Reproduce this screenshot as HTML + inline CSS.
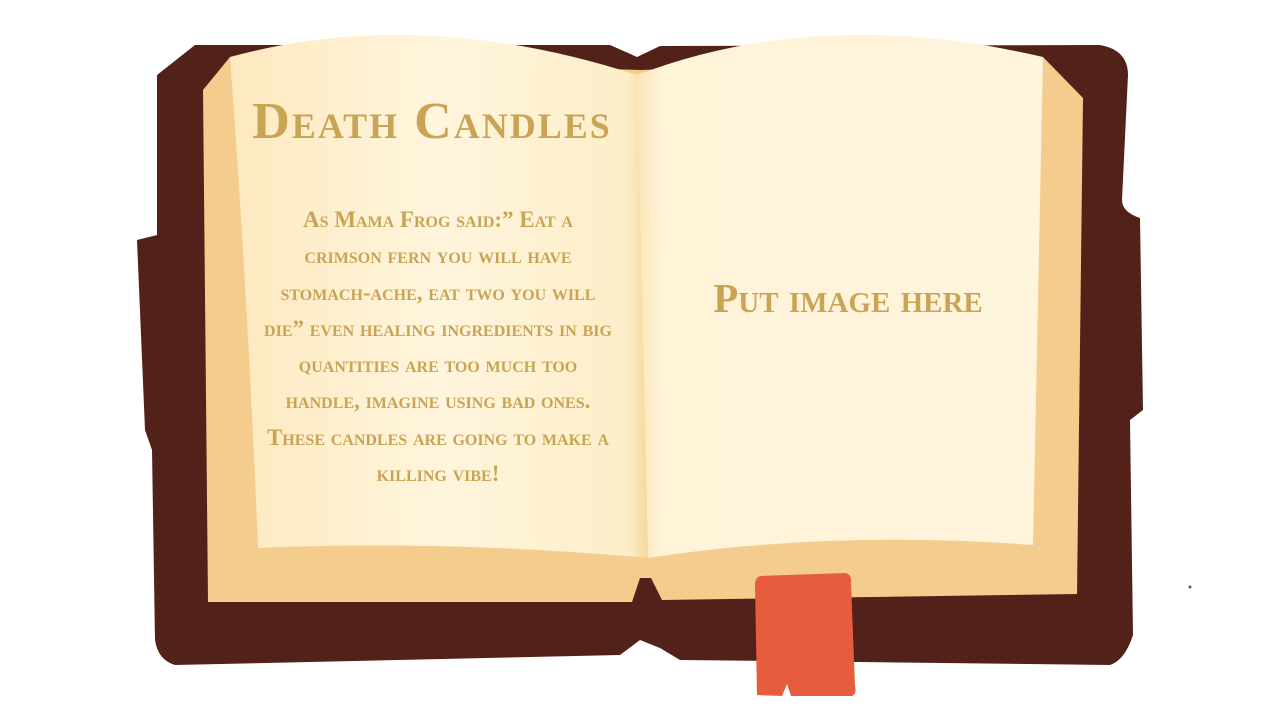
<!DOCTYPE html>
<html><head><meta charset="utf-8"><style>
html,body{margin:0;padding:0;background:#fff;width:1280px;height:720px;overflow:hidden;position:relative}
.t{position:absolute;color:#c9a455;font-family:"Liberation Serif",serif;font-variant:small-caps;text-align:center;font-weight:bold;white-space:nowrap}
</style></head><body>
<svg width="1280" height="720" style="position:absolute;left:0;top:0">
<defs>
<linearGradient id="pl" x1="0" x2="1"><stop offset="0" stop-color="#fde9bf"/><stop offset="0.5" stop-color="#fff5dd"/><stop offset="0.95" stop-color="#fdeec9"/><stop offset="1" stop-color="#f6d89a"/></linearGradient>
<linearGradient id="pr" x1="0" x2="1"><stop offset="0" stop-color="#fbe6b6"/><stop offset="0.06" stop-color="#fff3d8"/><stop offset="1" stop-color="#fff4dc"/></linearGradient>
</defs>
<path fill="#52221a" d="M195,45 L610,45 L637,57 L660,46 L1100,45 Q1128,50 1128,75 L1122,200 Q1122,212 1140,218 L1143,410 L1130,420 L1133,635 Q1125,660 1110,665 L860,662 L680,660 L660,648 L640,640 L620,655 L175,665 Q158,660 155,640 L152,450 L145,430 L137,240 L157,235 L157,75 Z"/>
<path fill="#f4cc8e" d="M203,90 L230,57 L640,70 L1043,57 L1083,98 L1077,594 L662,600 L651,578 L640,578 L632,602 L208,602 Z"/>
<path fill="url(#pl)" d="M230,57 Q420,5 637,75 L648,558 Q450,540 258,548 Q248,300 230,57 Z"/>
<path fill="url(#pr)" d="M637,75 Q820,5 1043,57 L1033,545 Q830,530 648,558 Z"/>
<path fill="#e75c3c" d="M760,576 L846,573 Q852,575 851,582 L855,686 Q857,694 852,696 L791,696 L787,684 L782,696 L757,695 L755,585 Q755,578 760,576 Z"/>
<circle cx="1190" cy="587" r="1.5" fill="#8a4a30"/>
</svg>
<div class="t" style="left:230px;top:92px;width:404px;font-size:52px;line-height:60px;letter-spacing:2px">Death Candles</div>
<div class="t" style="left:238px;top:202px;width:400px;font-size:23px;line-height:36.3px">As Mama Frog said:” Eat a<br>crimson fern you will have<br>stomach-ache, eat two you will<br>die” even healing ingredients in big<br>quantities are too much too<br>handle, imagine using bad ones.<br>These candles are going to make a<br>killing vibe!</div>
<div class="t" style="left:660px;top:272px;width:376px;font-size:41px;line-height:52px">Put image here</div>
</body></html>
